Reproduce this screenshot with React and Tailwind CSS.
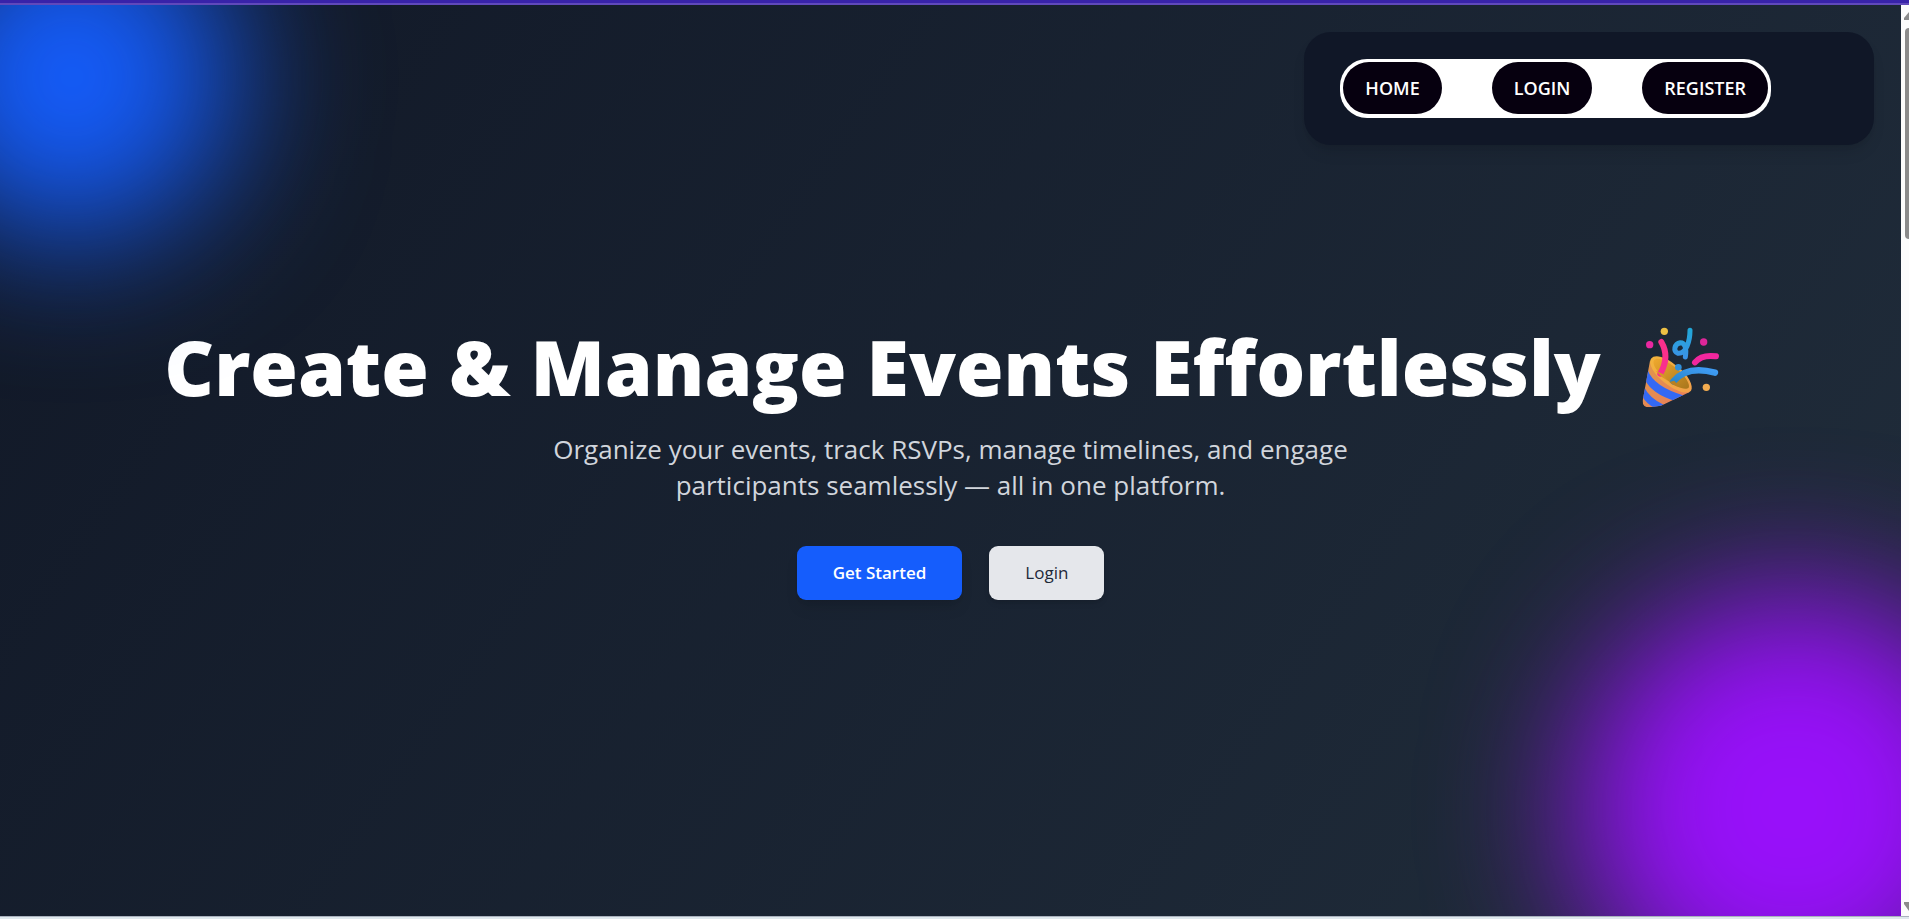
const navItems = ["HOME", "LOGIN", "REGISTER"];

function PartyPopper() {
  return (
    <svg viewBox="66 48 240 249" className="h-[83px] w-20 shrink-0" role="img" aria-label="Party popper">
      <defs>
        <linearGradient id="cone" x1="0" y1="0" x2="1" y2="1">
          <stop offset="0" stopColor="#dc9a48" />
          <stop offset="1" stopColor="#ee7a5e" />
        </linearGradient>
        <linearGradient id="inside" x1="0" y1="0" x2="1" y2="1">
          <stop offset="0" stopColor="#f0a92e" />
          <stop offset="1" stopColor="#a8761c" />
        </linearGradient>
        <linearGradient id="rim" x1="0" y1="0" x2="1" y2="1">
          <stop offset="0" stopColor="#f3b43c" />
          <stop offset="1" stopColor="#f2a04a" />
        </linearGradient>
        <linearGradient id="stream" x1="0" y1="1" x2="1" y2="0">
          <stop offset="0" stopColor="#2b86c9" />
          <stop offset="1" stopColor="#3f9cf5" />
        </linearGradient>
        <linearGradient id="curl" x1="0" y1="0" x2="0" y2="1">
          <stop offset="0" stopColor="#22a7d8" />
          <stop offset="1" stopColor="#3a93e6" />
        </linearGradient>
        <clipPath id="coneShape">
          <path d="M93 152 L71 272 Q70 292 92 292 L126 287 L212 246 L180 225 L120 180Z" />
        </clipPath>
      </defs>
      <g clipPath="url(#coneShape)">
        <rect x="60" y="140" width="170" height="160" fill="url(#cone)" />
        <path d="M86 180 Q104 230 196 257 L166 272 Q100 252 78 210Z" fill="#3369f4" />
        <path d="M74 228 Q90 264 134 284 L108 294 Q82 282 68 256Z" fill="#3369f4" />
      </g>
      <path d="M96 146 C108 130 140 140 175 169 C208 195 225 229 216 242 C204 256 168 242 137 218 C105 193 86 160 96 146Z" fill="url(#rim)" />
      <path d="M105 151 C114 139 142 151 171 174 C198 196 215 223 209 233 C199 242 168 231 141 208 C114 186 98 162 105 151Z" fill="url(#inside)" />
      <path d="M127 96 Q153 140 124 191" fill="none" stroke="#f92f8c" strokeWidth="18" strokeLinecap="round" />
      <path d="M110 182 Q127 202 146 212 L132 192Z" fill="#d69628" />
      <path d="M163 214 Q205 165 288 188" fill="none" stroke="url(#stream)" strokeWidth="19" strokeLinecap="round" />
      <path d="M151 216 Q166 229 181 230 L166 212Z" fill="#b88020" />
      <path d="M228 157 Q248 133 291 139" fill="none" stroke="#f2279e" strokeWidth="18" strokeLinecap="round" />
      <path d="M213 61 C213 94 201 132 177 130 C161 125 166 101 184 98 C199 98 203 116 199 141" fill="none" stroke="url(#curl)" strokeWidth="15" strokeLinecap="round" strokeLinejoin="round" />
      <circle cx="178" cy="172" r="10" fill="#2f8fdb" />
      <circle cx="136" cy="64" r="11" fill="#edc044" />
      <circle cx="92" cy="104" r="11" fill="#ea28a0" />
      <circle cx="254" cy="96" r="11" fill="#dd2699" />
      <circle cx="262" cy="232" r="11" fill="#f1ab50" />
    </svg>
  );
}

export default function App() {
  return (
    <div className="flex h-screen flex-col overflow-hidden bg-[#dfe8ed] font-['Open_Sans','Noto_Sans',sans-serif]">
      <div className="h-[5px] shrink-0 border-b-2 border-[#6049bb] bg-[#3823a9]" />
      <div className="flex min-h-0 flex-1 border-b border-[#a9b1bd]">
        <div className="relative flex min-w-0 flex-1 flex-col overflow-hidden bg-linear-[125deg] from-[#111827] to-[#1f2b39] to-90%">
          <header className="flex justify-end px-[27px] pt-[27px]">
            <nav className="rounded-[27px] bg-[#101727] py-[27px] pr-[103px] pl-9 shadow-lg">
              <ul className="flex gap-[50px] rounded-[27px] bg-white p-[3px] pb-1">
                {navItems.map((item) => (
                  <li key={item}>
                    <a href="#" className="block rounded-[26px] bg-[#06000f] px-[22px] py-[13px] text-[18px] leading-[26px] font-semibold text-white">
                      {item}
                    </a>
                  </li>
                ))}
              </ul>
            </nav>
          </header>
          <main className="flex flex-col items-center pt-[177px] text-center">
            <h1 className="flex items-center gap-10 pr-4 text-[77px] leading-[90px] font-extrabold whitespace-nowrap text-white">
              Create &amp; Manage Events Effortlessly
              <PartyPopper />
            </h1>
            <p className="mt-[19px] max-w-[864px] text-[26px] leading-9 text-gray-300">
              Organize your events, track RSVPs, manage timelines, and engage participants seamlessly — all in one platform.
            </p>
            <div className="mt-[43px] flex gap-[27px]">
              <button className="rounded-[9px] bg-[#155dfc] px-9 py-[13px] text-[17px] leading-7 font-semibold text-white shadow-lg">Get Started</button>
              <button className="rounded-[9px] bg-gray-200 px-9 py-[13px] text-[17px] leading-7 font-medium text-gray-800 shadow-md">Login</button>
            </div>
          </main>
          <div className="pointer-events-none absolute -top-[90px] -left-[90px] size-[324px] rounded-full bg-[#155dfc] blur-[72px]" />
          <div className="pointer-events-none absolute -right-[108px] -bottom-[108px] size-[432px] rounded-full bg-[#9810fa] blur-[72px]" />
        </div>
        <div className="flex w-2 shrink-0 flex-col items-end overflow-hidden bg-[#fcfcfc]" aria-hidden="true">
          <svg viewBox="0 0 5 8" className="mt-[7px] h-2 w-[5px]"><path d="M5 0L0 6V8H5Z" fill="#8b8b8b" /></svg>
          <div className="mt-2 h-[211px] w-1 rounded-l-full bg-[#8b8b8b]" />
          <svg viewBox="0 0 5 9" className="mt-auto mb-[5px] h-[9px] w-[5px]"><path d="M0 0H5V9L0 2Z" fill="#8b8b8b" /></svg>
        </div>
      </div>
      <div className="h-0.5 shrink-0" />
    </div>
  );
}
